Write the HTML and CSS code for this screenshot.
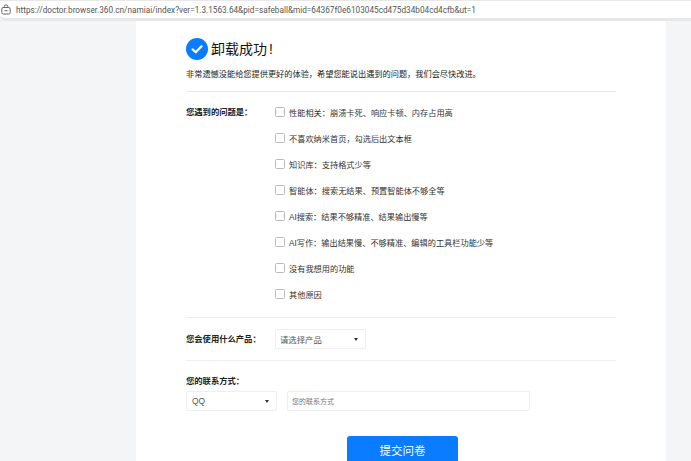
FILE: index.html
```html
<!DOCTYPE html>
<html lang="zh">
<head>
<meta charset="utf-8">
<title>卸载成功</title>
<link rel="stylesheet" href="styles.css">
</head>
<body>
<div class="urlbar">
  <svg class="lock" width="10" height="11" viewBox="0 0 10 11"><path d="M3.2 3.5V2.6a1.8 1.8 0 0 1 3.6 0v.9" fill="none" stroke="#666" stroke-width="1"/><rect x=".8" y="3.5" width="8.4" height="6.5" rx="1.4" fill="none" stroke="#666" stroke-width="1"/><rect x="3.5" y="6.2" width="3" height="1" fill="#666"/></svg>
  <span class="url">https://doctor.browser.360.cn/namiai/index?ver=1.3.1563.64&amp;pid=safeball&amp;mid=64367f0e6103045cd475d34b04cd4cfb&amp;ut=1</span>
</div>
<main class="page">
  <section class="card">
    <div class="title-row">
      <svg class="check" width="22" height="22" viewBox="0 0 22 22"><circle cx="11" cy="11" r="11" fill="#0a7cff"/><path d="M6.5 11.3l3.2 3 5.8-6" fill="none" stroke="#fff" stroke-width="2.2" stroke-linecap="round" stroke-linejoin="round"/></svg>
      <h1>卸载成功 !</h1>
    </div>
    <p class="intro">非常遗憾没能给您提供更好的体验，希望您能说出遇到的问题，我们会尽快改进。</p>
    <div class="problems">
      <div class="label">您遇到的问题是：</div>
      <ul class="options">
        <li><span class="box"></span>性能相关：崩溃卡死、响应卡顿、内存占用高</li>
        <li><span class="box"></span>不喜欢纳米首页，勾选后出文本框</li>
        <li><span class="box"></span>知识库：支持格式少等</li>
        <li><span class="box"></span>智能体：搜索无结果、预置智能体不够全等</li>
        <li><span class="box"></span>AI搜索：结果不够精准、结果输出慢等</li>
        <li><span class="box"></span>AI写作：输出结果慢、不够精准、编辑的工具栏功能少等</li>
        <li><span class="box"></span>没有我想用的功能</li>
        <li><span class="box"></span>其他原因</li>
      </ul>
    </div>
    <div class="product">
      <div class="label">您会使用什么产品：</div>
      <div class="select select-product">请选择产品<i class="caret"></i></div>
    </div>
    <div class="contact">
      <div class="label">您的联系方式：</div>
      <div class="contact-row">
        <div class="select select-qq">QQ<i class="caret"></i></div>
        <div class="input">您的联系方式</div>
      </div>
    </div>
    <div class="actions"><button class="submit">提交问卷</button></div>
  </section>
</main>
</body>
</html>
```
FILE: styles.css
```css
* { box-sizing: border-box; }
html, body { margin: 0; height: 461px; overflow: hidden; }
body {
  background: #f4f5f7;
  font-family: "Liberation Sans", "Noto Sans CJK SC", sans-serif;
  color: #222;
}
.urlbar {
  height: 21px;
  background: #fff;
  border-top: 1px solid #e8e8e8;
  border-bottom: 3px solid #e8e8e8;
  border-radius: 0 0 0 6px;
  display: flex;
  align-items: center;
  padding-left: 1px;
  gap: 5px;
}
.lock { flex: none; }
.url { font-size: 8.22px; color: #555; white-space: nowrap; font-family: Roboto, sans-serif; }
.page { display: flex; padding-left: 136px; }
.card {
  width: 530px;
  height: 440px;
  background: #fff;
  padding: 17px 50px 0;
}
.title-row { display: flex; align-items: center; gap: 3px; height: 22px; }
h1 { margin: 0; font-size: 14px; font-weight: 400; color: #111; line-height: 22px; word-spacing: -2px; }
.intro {
  margin: 8px 0 0;
  font-size: 8.2px;
  line-height: 14px;
  color: #222;
  padding-bottom: 9px;
  border-bottom: 1px solid #e8e8e8;
}
.label { font-size: 8.3px; font-weight: 700; color: #222; line-height: 14px; }
.problems { display: flex; padding: 7px 0 10px; border-bottom: 1px solid #eee; }
.problems .label { width: 89px; flex: none; margin-top: 6px; }
.options { list-style: none; margin: 0; padding: 0; }
.options li {
  display: flex;
  align-items: center;
  gap: 4px;
  height: 26px;
  font-size: 8.2px;
  color: #333;
}
.box {
  width: 10px;
  height: 10px;
  border: 1px solid #bbb;
  border-radius: 1.5px;
  background: #fff;
  flex: none;
}
.product { display: flex; align-items: center; height: 43px; border-bottom: 1px solid #eee; }
.product .label { width: 89px; flex: none; }
.select {
  display: flex;
  align-items: center;
  justify-content: space-between;
  height: 20px;
  border: 1px solid #eee;
  border-radius: 2px;
  padding: 0 7px 0 4px;
  font-size: 8.4px;
  color: #555;
  background: #fff;
}
.select-product { width: 91px; }
.select-qq { width: 91px; padding-left: 5px; }
.caret {
  width: 0;
  height: 0;
  border-left: 2.5px solid transparent;
  border-right: 2.5px solid transparent;
  border-top: 3px solid #333;
}
.contact { padding-top: 13px; }
.contact-row { display: flex; gap: 10px; margin-top: 3px; }
.input {
  width: 243px;
  height: 20px;
  border: 1px solid #eee;
  border-radius: 2px;
  padding-left: 4px;
  display: flex;
  align-items: center;
  font-size: 7px;
  color: #777;
}
.actions { display: flex; justify-content: center; padding-top: 25px; margin-left: 3px; }
.submit {
  width: 111px;
  height: 28px;
  flex: none;
  border: 0;
  border-radius: 3px 3px 0 0;
  background: #0a7cff;
  color: #fff;
  font-family: inherit;
  font-size: 11.5px;
  padding: 0;
}
```
